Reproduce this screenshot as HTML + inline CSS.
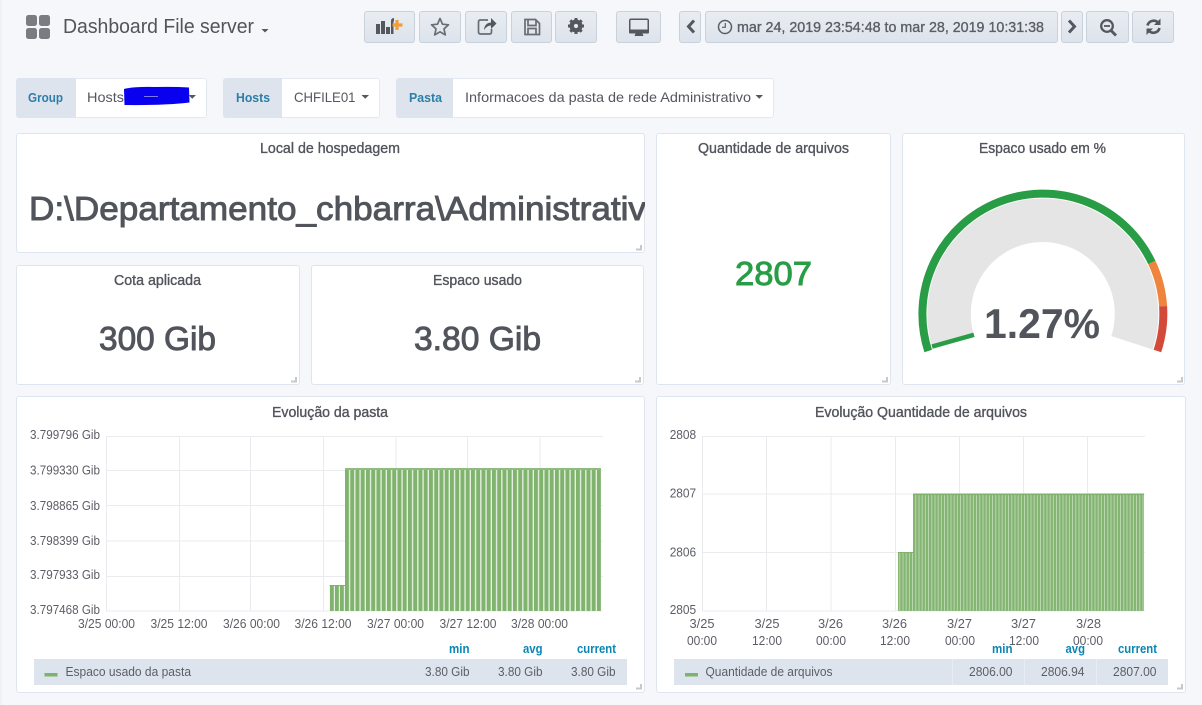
<!DOCTYPE html>
<html lang="pt"><head><meta charset="utf-8"><title>Dashboard File server</title>
<style>
html,body{margin:0;padding:0;width:1202px;height:705px;overflow:hidden;background:#f6f7fa;font-family:"Liberation Sans",sans-serif}
#edge{position:absolute;left:0;top:0;width:3px;height:705px;background:linear-gradient(90deg,#eceef2,#f6f7fa)}
.p{position:absolute;box-sizing:border-box;background:#fff;border:1px solid #dfe5ef;border-radius:3px}
.b{position:absolute;box-sizing:border-box;top:11px;height:32px;border:1px solid #c9d1da;border-radius:3px;background:linear-gradient(180deg,#e9edf2,#dde3ec)}
.l{position:absolute;box-sizing:border-box;top:78px;height:40px;background:#dde4ed;border-radius:3px 0 0 3px}
.v{position:absolute;box-sizing:border-box;top:78px;height:40px;background:#fff;border:1px solid #e4e8f0;border-left:0;border-radius:0 3px 3px 0}
.lg{position:absolute;top:659px;height:26px;background:#dde4ed}
svg{position:absolute;left:0;top:0}
text{font-family:"Liberation Sans",sans-serif;fill:#52545c}
.t{font-size:14.5px;stroke:#52545c;stroke-width:.35px}
.a{font-size:12.5px;fill:#5c5e66}
.h{font-size:12.5px;font-weight:bold;fill:#0a86b5}
.vl{font-size:12.5px;fill:#5c5e66}
.big{font-size:33px;stroke:#52545c;stroke-width:.9px}
.lab{font-size:13px;font-weight:bold;fill:#2d7ea8}
.val{font-size:14px;fill:#55575f}
.i{fill:none;stroke:#6a6c73;stroke-width:1.7}
.f{fill:#55575f}
</style></head><body>
<div id="edge"></div>

<div class="b" style="left:364px;width:51px"></div>
<div class="b" style="left:419px;width:42px"></div>
<div class="b" style="left:465px;width:42px"></div>
<div class="b" style="left:511px;width:41px"></div>
<div class="b" style="left:555px;width:42px"></div>
<div class="b" style="left:616px;width:45px"></div>
<div class="b" style="left:679px;width:22px"></div>
<div class="b" style="left:705px;width:353px"></div>
<div class="b" style="left:1061px;width:22px"></div>
<div class="b" style="left:1086px;width:43px"></div>
<div class="b" style="left:1132px;width:42px"></div>

<div class="l" style="left:16px;width:60px"></div><div class="v" style="left:76px;width:131px"></div>
<div class="l" style="left:223px;width:59px"></div><div class="v" style="left:282px;width:98px"></div>
<div class="l" style="left:396px;width:57px"></div><div class="v" style="left:453px;width:321px"></div>

<div class="p" style="left:16px;top:133px;width:629px;height:120px"></div>
<div class="p" style="left:16px;top:265px;width:284px;height:120px"></div>
<div class="p" style="left:311px;top:265px;width:333px;height:120px"></div>
<div class="p" style="left:656px;top:133px;width:235px;height:252px"></div>
<div class="p" style="left:902px;top:133px;width:283px;height:252px"></div>
<div class="p" style="left:16px;top:396px;width:629px;height:297px"></div>
<div class="p" style="left:656px;top:396px;width:530px;height:297px"></div>
<div class="lg" style="left:34px;width:593px"></div>
<div class="lg" style="left:674px;width:494px"></div>

<svg width="1202" height="705" viewBox="0 0 1202 705" xmlns="http://www.w3.org/2000/svg">
<defs>
<pattern id="s1" x="345" y="0" width="5.25" height="10" patternUnits="userSpaceOnUse"><rect width="5.25" height="10" fill="#e6f0e1"/><rect x="0" width="3.900" height="10" fill="#80b36d"/></pattern>
<pattern id="s2" x="913" y="0" width="3.2" height="10" patternUnits="userSpaceOnUse"><rect width="3.2" height="10" fill="#c6ddbc"/><rect x="0" width="2.4" height="10" fill="#84b572"/></pattern>
<clipPath id="cp"><rect x="17" y="134" width="628" height="118"/></clipPath>
</defs>

<!-- header -->
<g fill="#7b7c82"><rect x="26" y="15" width="11" height="11" rx="2.5"/><rect x="39" y="15" width="11" height="11" rx="2.5"/><rect x="26" y="28" width="11" height="11" rx="2.5"/><rect x="39" y="28" width="11" height="11" rx="2.5"/></g>
<text x="63" y="33" font-size="20.5" textLength="191" lengthAdjust="spacingAndGlyphs">Dashboard File server</text>
<path d="M261.500 29h7l-3.500 3.500z" class="f"/>

<!-- bars+ -->
<g class="f"><rect x="376" y="24" width="4" height="10"/><rect x="381" y="21" width="4" height="13"/><rect x="386" y="27" width="4" height="7"/><path d="M391 34V21q0-3 3-3v3q-.5 0-.5 1v12z"/></g>
<path d="M397 20v10M392.500 25h10" stroke="#f29d38" stroke-width="3.200" fill="none"/>
<!-- star -->
<path d="M440 18.500l2.500 5.700 6 .6-4.500 4.100 1.300 6-5.300-3.100-5.300 3.100 1.300-6-4.500-4.100 6-.6z" class="i" stroke-linejoin="round"/>
<!-- share -->
<path d="M488 20h-7.500q-2 0-2 2v10q0 2 2 2h9q2 0 2-2v-3" class="i"/>
<path d="M484 30q.5-7 7-7.500V18l5.500 5.500-5.500 5.500v-3.500q-4 0-7 4.500z" class="f"/>
<!-- save -->
<path d="M525 19.500h10.500l4 4v11h-14.500z M528 20v5.500h8V20 M528 34v-5.500h8V34" class="i"/>
<!-- cog -->
<circle cx="576" cy="26" r="4.300" fill="none" stroke="#55575f" stroke-width="4.400"/>
<path d="M576 18v3.500M576 30.500v3.500M568 26h3.500M580.500 26h3.500M570.300 20.300l2.400 2.400M579.300 29.300l2.400 2.400M570.300 31.700l2.400-2.400M579.300 22.700l2.400-2.400" stroke="#55575f" stroke-width="3"/>
<!-- monitor -->
<path d="M631 18.500h16q2 0 2 2v12q0 1-1 1h-18q-1 0-1-1v-12q0-2 2-2z" class="f"/>
<rect x="630.500" y="20" width="17" height="9.500" fill="#e4e8ee"/>
<path d="M635.500 33.500h7l1 2.500h-9z" class="f"/>
<!-- chevrons -->
<path d="M694 20.500l-5.500 6 5.500 6" fill="none" stroke="#55575f" stroke-width="3"/>
<path d="M1069 20.500l5.500 6-5.500 6" fill="none" stroke="#55575f" stroke-width="3"/>
<!-- clock -->
<circle cx="725" cy="27" r="6.500" fill="none" stroke="#5c5e66" stroke-width="1.500"/><path d="M725.300 23v4.300h-3.300" fill="none" stroke="#5c5e66" stroke-width="1.200"/>
<text x="737" y="32" font-size="14.500" style="fill:#5c5e66;stroke:#5c5e66;stroke-width:.35px" textLength="307" lengthAdjust="spacingAndGlyphs">mar 24, 2019 23:54:48 to mar 28, 2019 10:31:38</text>
<!-- zoom out -->
<circle cx="1107" cy="26" r="5.800" fill="none" stroke="#55575f" stroke-width="2.300"/><path d="M1104 26h6" stroke="#55575f" stroke-width="1.800"/><path d="M1111 30.500l5 5" stroke="#55575f" stroke-width="2.800"/>
<!-- refresh -->
<path d="M1147.500 25.500a6.300 6.300 0 0 1 10.500-3" fill="none" stroke="#55575f" stroke-width="2.600"/><path d="M1160.500 18.500v6.500h-6.500z" class="f"/>
<path d="M1159.500 28a6.300 6.300 0 0 1-10.500 3" fill="none" stroke="#55575f" stroke-width="2.600"/><path d="M1146.500 35v-6.500h6.500z" class="f"/>

<!-- variables -->
<text x="28" y="102" class="lab" textLength="35" lengthAdjust="spacingAndGlyphs">Group</text>
<text x="87" y="102" class="val" textLength="37" lengthAdjust="spacingAndGlyphs">Hosts</text>
<path d="M124 89q10-2.500 30-2 20-.5 35 .5l.5 15q-25 3-65 2.500z" fill="#0a00f0"/>
<path d="M144 96.500h14" stroke="#7d78ee" stroke-width="1"/>
<path d="M188.500 95h7.500l-3.750 3.800z" class="f"/>
<text x="236" y="102" class="lab" textLength="34" lengthAdjust="spacingAndGlyphs">Hosts</text>
<text x="294" y="102" class="val" textLength="61.500" lengthAdjust="spacingAndGlyphs">CHFILE01</text>
<path d="M361.500 95h7.500l-3.750 3.800z" class="f"/>
<text x="409" y="102" class="lab" textLength="33" lengthAdjust="spacingAndGlyphs">Pasta</text>
<text x="465" y="102" class="val" textLength="286" lengthAdjust="spacingAndGlyphs">Informacoes da pasta de rede Administrativo</text>
<path d="M755.500 95h7.500l-3.750 3.800z" class="f"/>

<!-- panel titles -->
<text x="260" y="153" class="t" textLength="140" lengthAdjust="spacingAndGlyphs">Local de hospedagem</text>
<text x="698" y="153" class="t" textLength="151" lengthAdjust="spacingAndGlyphs">Quantidade de arquivos</text>
<text x="979" y="153" class="t" textLength="127" lengthAdjust="spacingAndGlyphs">Espaco usado em %</text>
<text x="114" y="285" class="t" textLength="87" lengthAdjust="spacingAndGlyphs">Cota aplicada</text>
<text x="433" y="285" class="t" textLength="89" lengthAdjust="spacingAndGlyphs">Espaco usado</text>
<text x="272" y="417" class="t" textLength="116" lengthAdjust="spacingAndGlyphs">Evolução da pasta</text>
<text x="815" y="417" class="t" textLength="212" lengthAdjust="spacingAndGlyphs">Evolução Quantidade de arquivos</text>

<!-- big values -->
<g clip-path="url(#cp)"><text x="29" y="220" class="big" textLength="617" lengthAdjust="spacingAndGlyphs">D:\Departamento_chbarra\Administrativ</text></g>
<text x="99" y="350" class="big" textLength="117" lengthAdjust="spacingAndGlyphs">300 Gib</text>
<text x="414" y="350" class="big" textLength="127" lengthAdjust="spacingAndGlyphs">3.80 Gib</text>
<text x="735" y="285" class="big" style="fill:#299c46;stroke:#299c46" textLength="77" lengthAdjust="spacingAndGlyphs">2807</text>

<!-- gauge -->
<path d="M953.600 342.800A93.750 93.750 0 1 1 1132 342.800" fill="none" stroke="#e5e5e5" stroke-width="43.500"/>
<path d="M953.600 342.800L952.400 338.500" fill="none" stroke="#299c46" stroke-width="43.500"/>
<path d="M928.200 351A120.500 120.500 0 0 1 1151.800 262.500" fill="none" stroke="#299c46" stroke-width="8"/>
<path d="M1151.800 262.500A120.500 120.500 0 0 1 1163.100 306.200" fill="none" stroke="#ef843c" stroke-width="8"/>
<path d="M1163.100 306.200A120.500 120.500 0 0 1 1157.400 351" fill="none" stroke="#d44a3a" stroke-width="8"/>
<text x="984" y="338" font-size="42" font-weight="bold" textLength="116" lengthAdjust="spacingAndGlyphs">1.27%</text>

<!-- chart 1 grid -->
<g stroke="#e9ebef" stroke-width="1" fill="none">
<path d="M106 436.500H603M106 470.500H603M106 505.500H603M106 541H603M106 576.500H603M106 611H603"/>
<path d="M106.500 436V611M179.500 436V611M250.500 436V611M323.500 436V611M396 436V611M467.500 436V611M540 436V611"/>
</g>
<rect x="329.500" y="585" width="15.500" height="26" fill="#e6f0e1"/>
<path d="M330 585h3.800v26h-3.800zM335 585h3.800v26h-3.800zM340 585h3.800v26h-3.800z" fill="#80b36d"/>
<path d="M329.500 585.500H345" stroke="#7eb26d"/>
<rect x="345" y="469" width="256" height="142" fill="url(#s1)"/>
<path d="M345 469H601" stroke="#8fbc7e" stroke-width="2"/>
<g class="a">
<text class="a" x="30" y="439" textLength="70" lengthAdjust="spacingAndGlyphs">3.799796 Gib</text>
<text class="a" x="30" y="474.500" textLength="70" lengthAdjust="spacingAndGlyphs">3.799330 Gib</text>
<text class="a" x="30" y="510" textLength="70" lengthAdjust="spacingAndGlyphs">3.798865 Gib</text>
<text class="a" x="30" y="545" textLength="70" lengthAdjust="spacingAndGlyphs">3.798399 Gib</text>
<text class="a" x="30" y="579" textLength="70" lengthAdjust="spacingAndGlyphs">3.797933 Gib</text>
<text class="a" x="30" y="614" textLength="70" lengthAdjust="spacingAndGlyphs">3.797468 Gib</text>
<text class="a" x="78" y="628" textLength="57" lengthAdjust="spacingAndGlyphs">3/25 00:00</text>
<text class="a" x="150.500" y="628" textLength="57" lengthAdjust="spacingAndGlyphs">3/25 12:00</text>
<text class="a" x="223" y="628" textLength="57" lengthAdjust="spacingAndGlyphs">3/26 00:00</text>
<text class="a" x="294.500" y="628" textLength="57" lengthAdjust="spacingAndGlyphs">3/26 12:00</text>
<text class="a" x="367" y="628" textLength="57" lengthAdjust="spacingAndGlyphs">3/27 00:00</text>
<text class="a" x="439.500" y="628" textLength="57" lengthAdjust="spacingAndGlyphs">3/27 12:00</text>
<text class="a" x="511" y="628" textLength="57" lengthAdjust="spacingAndGlyphs">3/28 00:00</text>
</g>
<text class="h" x="449" y="653" textLength="20.500" lengthAdjust="spacingAndGlyphs">min</text>
<text class="h" x="523" y="653" textLength="19.500" lengthAdjust="spacingAndGlyphs">avg</text>
<text class="h" x="577" y="653" textLength="39" lengthAdjust="spacingAndGlyphs">current</text>
<rect x="44.500" y="673" width="13" height="3.500" fill="#7eb26d"/>
<text class="vl" x="65.500" y="676" textLength="125.500" lengthAdjust="spacingAndGlyphs">Espaco usado da pasta</text>
<text class="vl" x="425" y="676" textLength="44.500" lengthAdjust="spacingAndGlyphs">3.80 Gib</text>
<text class="vl" x="498" y="676" textLength="44.500" lengthAdjust="spacingAndGlyphs">3.80 Gib</text>
<text class="vl" x="571" y="676" textLength="44.500" lengthAdjust="spacingAndGlyphs">3.80 Gib</text>

<!-- chart 2 grid -->
<g stroke="#e9ebef" stroke-width="1" fill="none">
<path d="M702 436.500H1145M702 494H1145M702 552.500H1145M702 611H1145"/>
<path d="M702.500 436V611M766.500 436V611M831 436V611M895.500 436V611M959.500 436V611M1023.500 436V611M1087.500 436V611"/>
</g>
<rect x="898" y="552" width="15" height="59" fill="url(#s2)"/>
<path d="M898 552.500H913" stroke="#7eb26d"/>
<rect x="913" y="494" width="231" height="117" fill="url(#s2)"/>
<path d="M913 494.300H1144" stroke="#7eb26d" stroke-width="1.600"/>
<text class="a" x="669.700" y="439" textLength="26.500" lengthAdjust="spacingAndGlyphs">2808</text>
<text class="a" x="669.700" y="497.500" textLength="26.500" lengthAdjust="spacingAndGlyphs">2807</text>
<text class="a" x="669.700" y="556.500" textLength="26.500" lengthAdjust="spacingAndGlyphs">2806</text>
<text class="a" x="669.700" y="614" textLength="26.500" lengthAdjust="spacingAndGlyphs">2805</text>
<g text-anchor="start">
<text class="a" x="689.500" y="628" textLength="25" lengthAdjust="spacingAndGlyphs">3/25</text><text class="a" x="687" y="645" textLength="30" lengthAdjust="spacingAndGlyphs">00:00</text>
<text class="a" x="754.500" y="628" textLength="25" lengthAdjust="spacingAndGlyphs">3/25</text><text class="a" x="752" y="645" textLength="30" lengthAdjust="spacingAndGlyphs">12:00</text>
<text class="a" x="818" y="628" textLength="25" lengthAdjust="spacingAndGlyphs">3/26</text><text class="a" x="816" y="645" textLength="30" lengthAdjust="spacingAndGlyphs">00:00</text>
<text class="a" x="882" y="628" textLength="25" lengthAdjust="spacingAndGlyphs">3/26</text><text class="a" x="880" y="645" textLength="30" lengthAdjust="spacingAndGlyphs">12:00</text>
<text class="a" x="947" y="628" textLength="25" lengthAdjust="spacingAndGlyphs">3/27</text><text class="a" x="945" y="645" textLength="30" lengthAdjust="spacingAndGlyphs">00:00</text>
<text class="a" x="1011" y="628" textLength="25" lengthAdjust="spacingAndGlyphs">3/27</text><text class="a" x="1009" y="645" textLength="30" lengthAdjust="spacingAndGlyphs">12:00</text>
<text class="a" x="1076" y="628" textLength="25" lengthAdjust="spacingAndGlyphs">3/28</text><text class="a" x="1073" y="645" textLength="30" lengthAdjust="spacingAndGlyphs">00:00</text>
</g>
<text class="h" x="992" y="653" textLength="20.500" lengthAdjust="spacingAndGlyphs">min</text>
<text class="h" x="1065.500" y="653" textLength="19.500" lengthAdjust="spacingAndGlyphs">avg</text>
<text class="h" x="1118" y="653" textLength="39" lengthAdjust="spacingAndGlyphs">current</text>
<path d="M952.500 659v26M1024.500 659v26M1096.500 659v26" stroke="#e9edf3"/>
<rect x="685" y="673" width="13" height="3.500" fill="#7eb26d"/>
<text class="vl" x="705.500" y="676" textLength="127" lengthAdjust="spacingAndGlyphs">Quantidade de arquivos</text>
<text class="vl" x="969" y="676" textLength="43.500" lengthAdjust="spacingAndGlyphs">2806.00</text>
<text class="vl" x="1041" y="676" textLength="43.500" lengthAdjust="spacingAndGlyphs">2806.94</text>
<text class="vl" x="1113" y="676" textLength="43.500" lengthAdjust="spacingAndGlyphs">2807.00</text>

<!-- resize handles -->
<g fill="none" stroke="#c4c9d0" stroke-width="2">
<path d="M641 245v4.500h-5"/><path d="M296 377v4.500h-5"/><path d="M640 377v4.500h-5"/><path d="M887 377v4.500h-5"/><path d="M1182 377v4.500h-5"/><path d="M641 684v4.500h-5"/><path d="M1182 684v4.500h-5"/>
</g>
</svg>
</body></html>
